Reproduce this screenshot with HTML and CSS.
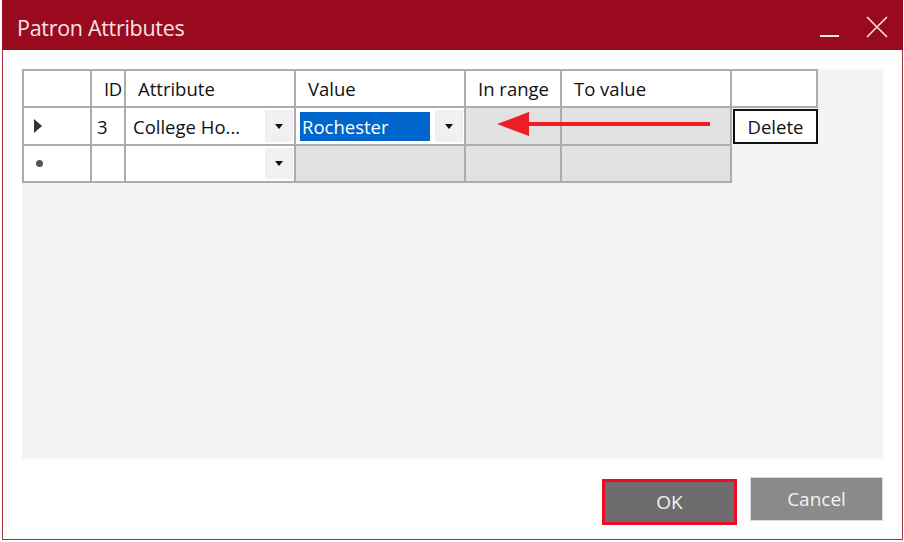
FILE: index.html
```
<!DOCTYPE html>
<html lang="en">
<head>
    <meta charset="UTF-8">
    <title>Patron Attributes</title>
    <link rel="stylesheet" href="styles.css">
</head>
<body>
    <div class="window">
        <div class="titlebar">
            <span class="title">Patron Attributes</span>
            <div class="controls">
                <span class="minimize"></span>
                <svg class="close" width="22" height="22" viewBox="0 0 22 22">
                    <path d="M1 1 L21 21 M21 1 L1 21" stroke="#f3e6e8" stroke-width="1.6" fill="none"/>
                </svg>
            </div>
        </div>
        <div class="content">
            <div class="grid-area">
                <table class="grid">
                    <colgroup>
                        <col class="c-rowhead">
                        <col class="c-id">
                        <col class="c-wide">
                        <col class="c-wide">
                        <col class="c-range">
                        <col class="c-wide">
                        <col class="c-spare">
                    </colgroup>
                    <tr class="head">
                        <th></th>
                        <th class="id">ID</th>
                        <th>Attribute</th>
                        <th>Value</th>
                        <th>In range</th>
                        <th>To value</th>
                        <th></th>
                    </tr>
                    <tr class="row">
                        <td><span class="current"></span></td>
                        <td class="num">3</td>
                        <td class="combo">
                            <span class="combo-text">College Ho...</span>
                            <span class="drop"><span class="caret"></span></span>
                        </td>
                        <td class="combo">
                            <span class="combo-text selected">Rochester</span>
                            <span class="drop"><span class="caret"></span></span>
                        </td>
                        <td class="off"></td>
                        <td class="off"></td>
                        <td class="btn-cell"><span class="delete">Delete</span></td>
                    </tr>
                    <tr class="row last">
                        <td><span class="newrow"></span></td>
                        <td class="num"></td>
                        <td class="combo">
                            <span class="combo-text"></span>
                            <span class="drop"><span class="caret"></span></span>
                        </td>
                        <td class="off"></td>
                        <td class="off"></td>
                        <td class="off"></td>
                        <td class="empty"></td>
                    </tr>
                </table>
                <svg class="arrow" width="220" height="30" viewBox="0 0 220 30">
                    <line x1="30" y1="15" x2="215" y2="15" stroke="#ee1c25" stroke-width="4"/>
                    <polygon points="2,15 34,3 34,27" fill="#ee1c25"/>
                </svg>
            </div>
            <div class="footer">
                <button class="btn ok">OK</button>
                <button class="btn cancel">Cancel</button>
            </div>
        </div>
    </div>
</body>
</html>
```

FILE: styles.css
```
body {
    margin: 0;
    padding: 0;
    background: #fff;
    font-family: 'Open Sans', 'Noto Sans', sans-serif;
}

.window {
    margin-left: 2px;
    width: 901px;
    height: 540px;
    display: flex;
    flex-direction: column;
    box-sizing: border-box;
}

.titlebar {
    height: 50px;
    background-color: #9a0a1e;
    display: flex;
    align-items: center;
    justify-content: space-between;
    padding: 0 15px 0 15px;
    flex-shrink: 0;
}

.title {
    color: #f4e4e7;
    font-size: 21.5px;
    letter-spacing: -0.3px;
    margin-top: 4px;
}

.controls {
    display: flex;
    align-items: center;
    gap: 27px;
    margin-top: 4px;
}

.minimize {
    width: 19px;
    height: 2px;
    background: #f3e6e8;
    margin-top: 18px;
}

.content {
    flex: 1;
    border: 1px solid #a3343f;
    border-top: none;
    padding: 19px 19px 0 19px;
    display: flex;
    flex-direction: column;
}

.grid-area {
    position: relative;
    height: 390px;
    background: #f4f4f4;
}

.grid {
    border-collapse: collapse;
    table-layout: fixed;
    width: 796px;
    font-size: 18.5px;
    color: #111;
}

.c-rowhead { width: 68px; }
.c-id { width: 34px; }
.c-wide { width: 170px; }
.c-range { width: 96px; }
.c-spare { width: 86px; }

.grid th,
.grid td {
    border: 2px solid #acacac;
    padding: 0;
    font-weight: normal;
    white-space: nowrap;
    overflow: hidden;
}

.grid tr.head { height: 37px; }
.grid tr.row { height: 38px; }
.grid tr.last { height: 37px; }

.grid th {
    background: #fff;
    text-align: left;
    padding-left: 12px;
}

.grid th.id {
    padding-left: 12px;
    letter-spacing: -0.5px;
}

.grid td {
    background: #fff;
}

.grid td.num {
    padding-left: 5px;
}

.current {
    display: block;
    margin-left: 10px;
    width: 0;
    height: 0;
    border-top: 7px solid transparent;
    border-bottom: 7px solid transparent;
    border-left: 8px solid #333;
}

.newrow {
    display: block;
    margin-left: 12px;
    width: 7px;
    height: 7px;
    border-radius: 50%;
    background: #555;
}

.combo {
    position: relative;
}

.combo-text {
    display: inline-block;
    margin-left: 7px;
    line-height: 29px;
    height: 29px;
    vertical-align: middle;
}

.combo-text.selected {
    background: #0066cc;
    color: #fff;
    width: 128px;
    padding-left: 2px;
    margin-left: 4px;
}

.drop {
    position: absolute;
    right: 1px;
    top: 2px;
    bottom: 2px;
    width: 28px;
    background: #f2eff3;
    display: flex;
    align-items: center;
    justify-content: center;
}

.caret {
    width: 0;
    height: 0;
    border-left: 4px solid transparent;
    border-right: 4px solid transparent;
    border-top: 5px solid #111;
}

.grid td.off {
    background: #e1e1e1;
}

.grid td.btn-cell,
.grid td.empty {
    border: none;
    background: transparent;
    padding: 0 0 0 1px;
    overflow: visible;
}

.grid td.empty {
    border-left: 2px solid #acacac;
}

.delete {
    display: flex;
    align-items: center;
    justify-content: center;
    box-sizing: border-box;
    width: 85px;
    height: 35px;
    border: 2px solid #111;
    background: #fff;
    font-size: 18.5px;
}

.arrow {
    position: absolute;
    left: 473px;
    top: 40px;
}

.footer {
    display: flex;
    justify-content: flex-end;
    align-items: flex-start;
    gap: 13px;
    padding-top: 18px;
}

.btn {
    font-family: 'Open Sans', 'Noto Sans', sans-serif;
    font-size: 19px;
    color: #f2f2f2;
    border: none;
    padding: 0;
    cursor: pointer;
}

.ok {
    width: 135px;
    height: 46px;
    margin-top: 2px;
    background: #6e6c6e;
    border: 3px solid #ee0c23;
}

.cancel {
    width: 133px;
    height: 44px;
    background: #8a898b;
    border: 1px solid #dadada;
}
```
